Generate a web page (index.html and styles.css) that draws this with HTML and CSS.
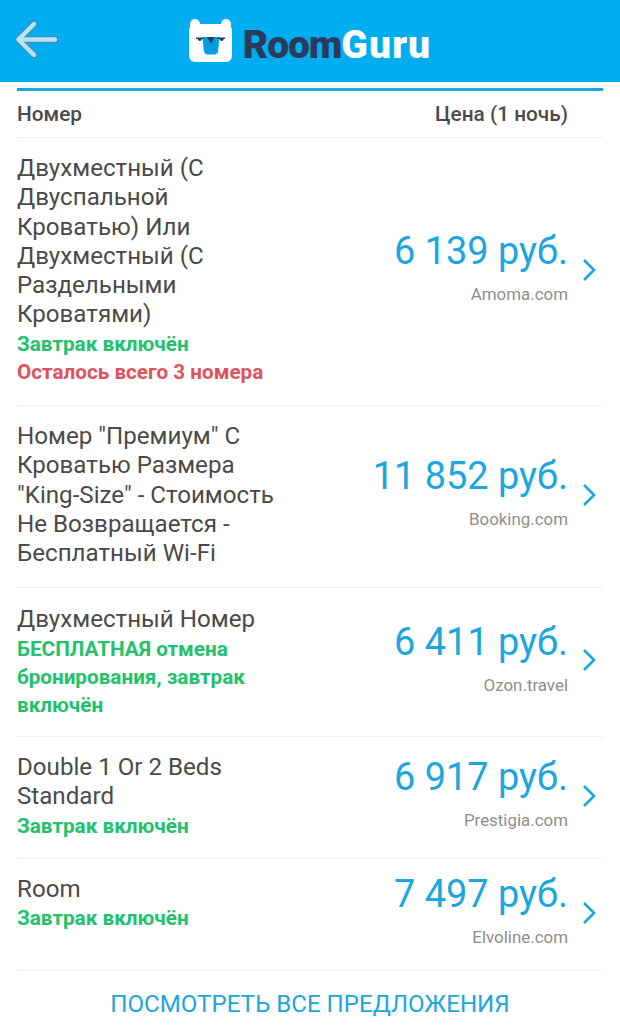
FILE: index.html
```html
<!DOCTYPE html>
<html lang="ru">
<head>
  <meta charset="UTF-8" />
  <title>RoomGuru</title>
  <link rel="stylesheet" href="styles.css">
</head>
<body>
  <div class="header">
    <svg class="back" viewBox="0 0 44 42" width="44" height="42">
      <path d="M41 20.5H4.5M20 5 4.5 20.5 20 36" fill="none" stroke="#3f8fba" stroke-width="7" stroke-linecap="round" stroke-linejoin="round"/>
      <path d="M41 20.5H4.5M20 5 4.5 20.5 20 36" fill="none" stroke="#b9e3f7" stroke-width="4.4" stroke-linecap="round" stroke-linejoin="round"/>
    </svg>
    <div class="logo">
      <svg class="bear" viewBox="0 0 43 43" width="43" height="43">
        <circle cx="6" cy="5" r="5" fill="#fff"/>
        <circle cx="37" cy="5" r="5" fill="#fff"/>
        <rect x="0" y="5" width="43" height="38" rx="6" fill="#fff"/>
        <path d="M13.5 18h17l-1.300 13.500c-.3 2.800-1.700 4-4 4h-6.400c-2.300 0-3.700-1.200-4-4z" fill="#00a0e0"/>
        <path d="M18 18h8l-4 6.500z" fill="#2c3a5e"/>
        <path d="M7 18.500h7.500v1.500h-1.700a2 2 0 0 1-4 0H7zM28.500 18.500H36v1.500h-1.300a2 2 0 0 1-4 0h-2.200z" fill="#2c3a5e"/>
      </svg>
      <span class="wordmark"><span class="room">Room</span><span class="guru">Guru</span></span>
    </div>
  </div>

  <div class="content">
    <div class="table-head">
      <span>Номер</span>
      <span>Цена (1 ночь)</span>
    </div>

    <div class="row row-1">
      <div class="room-info">
        <div class="room-name">Двухместный (С Двуспальной Кроватью) Или Двухместный (С Раздельными Кроватями)</div>
        <div class="note green">Завтрак включён</div>
        <div class="note red">Осталось всего 3 номера</div>
      </div>
      <div class="price-box">
        <div class="price">6 139 руб.</div>
        <div class="provider">Amoma.com</div>
      </div>
      <svg class="chevron" viewBox="0 0 14 24" width="14" height="24"><path d="M2 2l10 10L2 22" fill="none" stroke="#1ba6e0" stroke-width="2.6"/></svg>
    </div>

    <div class="row row-2">
      <div class="room-info">
        <div class="room-name">Номер "Премиум" С Кроватью Размера "King-Size" - Стоимость Не Возвращается - Бесплатный Wi-Fi</div>
      </div>
      <div class="price-box">
        <div class="price">11 852 руб.</div>
        <div class="provider">Booking.com</div>
      </div>
      <svg class="chevron" viewBox="0 0 14 24" width="14" height="24"><path d="M2 2l10 10L2 22" fill="none" stroke="#1ba6e0" stroke-width="2.6"/></svg>
    </div>

    <div class="row row-3">
      <div class="room-info">
        <div class="room-name">Двухместный Номер</div>
        <div class="note green">БЕСПЛАТНАЯ отмена бронирования, завтрак включён</div>
      </div>
      <div class="price-box">
        <div class="price">6 411 руб.</div>
        <div class="provider">Ozon.travel</div>
      </div>
      <svg class="chevron" viewBox="0 0 14 24" width="14" height="24"><path d="M2 2l10 10L2 22" fill="none" stroke="#1ba6e0" stroke-width="2.6"/></svg>
    </div>

    <div class="row row-4">
      <div class="room-info">
        <div class="room-name">Double 1 Or 2 Beds Standard</div>
        <div class="note green">Завтрак включён</div>
      </div>
      <div class="price-box">
        <div class="price">6 917 руб.</div>
        <div class="provider">Prestigia.com</div>
      </div>
      <svg class="chevron" viewBox="0 0 14 24" width="14" height="24"><path d="M2 2l10 10L2 22" fill="none" stroke="#1ba6e0" stroke-width="2.6"/></svg>
    </div>

    <div class="row row-5">
      <div class="room-info">
        <div class="room-name">Room</div>
        <div class="note green">Завтрак включён</div>
      </div>
      <div class="price-box">
        <div class="price">7 497 руб.</div>
        <div class="provider">Elvoline.com</div>
      </div>
      <svg class="chevron" viewBox="0 0 14 24" width="14" height="24"><path d="M2 2l10 10L2 22" fill="none" stroke="#1ba6e0" stroke-width="2.6"/></svg>
    </div>

    <div class="all-offers">ПОСМОТРЕТЬ ВСЕ ПРЕДЛОЖЕНИЯ</div>
  </div>
</body>
</html>
```

FILE: styles.css
```css
* {
  box-sizing: border-box;
}
html, body {
  height: 100%;
}
body {
  margin: 0;
  background: #fff;
  font-family: Roboto, "Noto Sans", sans-serif;
  color: #4a4a4a;
  overflow: hidden;
}
.header {
  position: relative;
  height: 82px;
  background: #00aeef;
  display: flex;
  align-items: center;
  justify-content: center;
}
.back {
  position: absolute;
  left: 14px;
  top: 19px;
}
.logo {
  display: flex;
  align-items: center;
  gap: 11px;
  margin-top: -1px;
}
.bear {
  display: block;
}
.wordmark {
  font-size: 39px;
  line-height: 42px;
  font-weight: 900;
  color: #fff;
  margin-top: 8px;
}
.room {
  color: #2c3a5e;
  letter-spacing: -1.1px;
}
.guru {
  letter-spacing: 1.1px;
}
.content {
  margin: 6px 17px 0;
  border-top: 3px solid #1ba6e0;
}
.table-head {
  height: 47px;
  padding-right: 35px;
  display: flex;
  justify-content: space-between;
  align-items: center;
  font-size: 20.8px;
  font-weight: 500;
  border-bottom: 1px solid #eeeeee;
}
.row {
  display: flex;
  align-items: center;
  border-bottom: 1px solid #eeeeee;
}
.row-1 { height: 268px; }
.row-2 { height: 182px; }
.row-3 { height: 149px; }
.row-4 { height: 122px; }
.row-5 { height: 112px; }
.room-info {
  width: 262px;
  flex-shrink: 0;
  align-self: flex-start;
  padding-top: 16px;
}
.row-3 .room-info {
  padding-top: 17px;
}
.room-name {
  font-size: 24.15px;
  line-height: 29.3px;
  color: #4a4a4a;
}
.note {
  font-size: 20.7px;
  line-height: 28px;
  font-weight: 700;
}
.row-3 .note {
  margin-top: 1px;
}
.green {
  color: #22c16b;
}
.red {
  color: #e2525c;
}
.price-box {
  flex: 1;
  text-align: right;
  padding-bottom: 9px;
}
.price {
  font-size: 37.9px;
  line-height: 46px;
  color: #1ba6e0;
  white-space: nowrap;
}
.provider {
  font-size: 16.9px;
  line-height: 24px;
  color: #8e8e8e;
  margin-top: 8px;
}
.chevron {
  margin-left: 14px;
  margin-right: 7px;
  margin-bottom: 4px;
  flex-shrink: 0;
}
.all-offers {
  margin-top: 18px;
  text-align: center;
  font-size: 24.1px;
  line-height: 30px;
  color: #1ba6e0;
}
```
